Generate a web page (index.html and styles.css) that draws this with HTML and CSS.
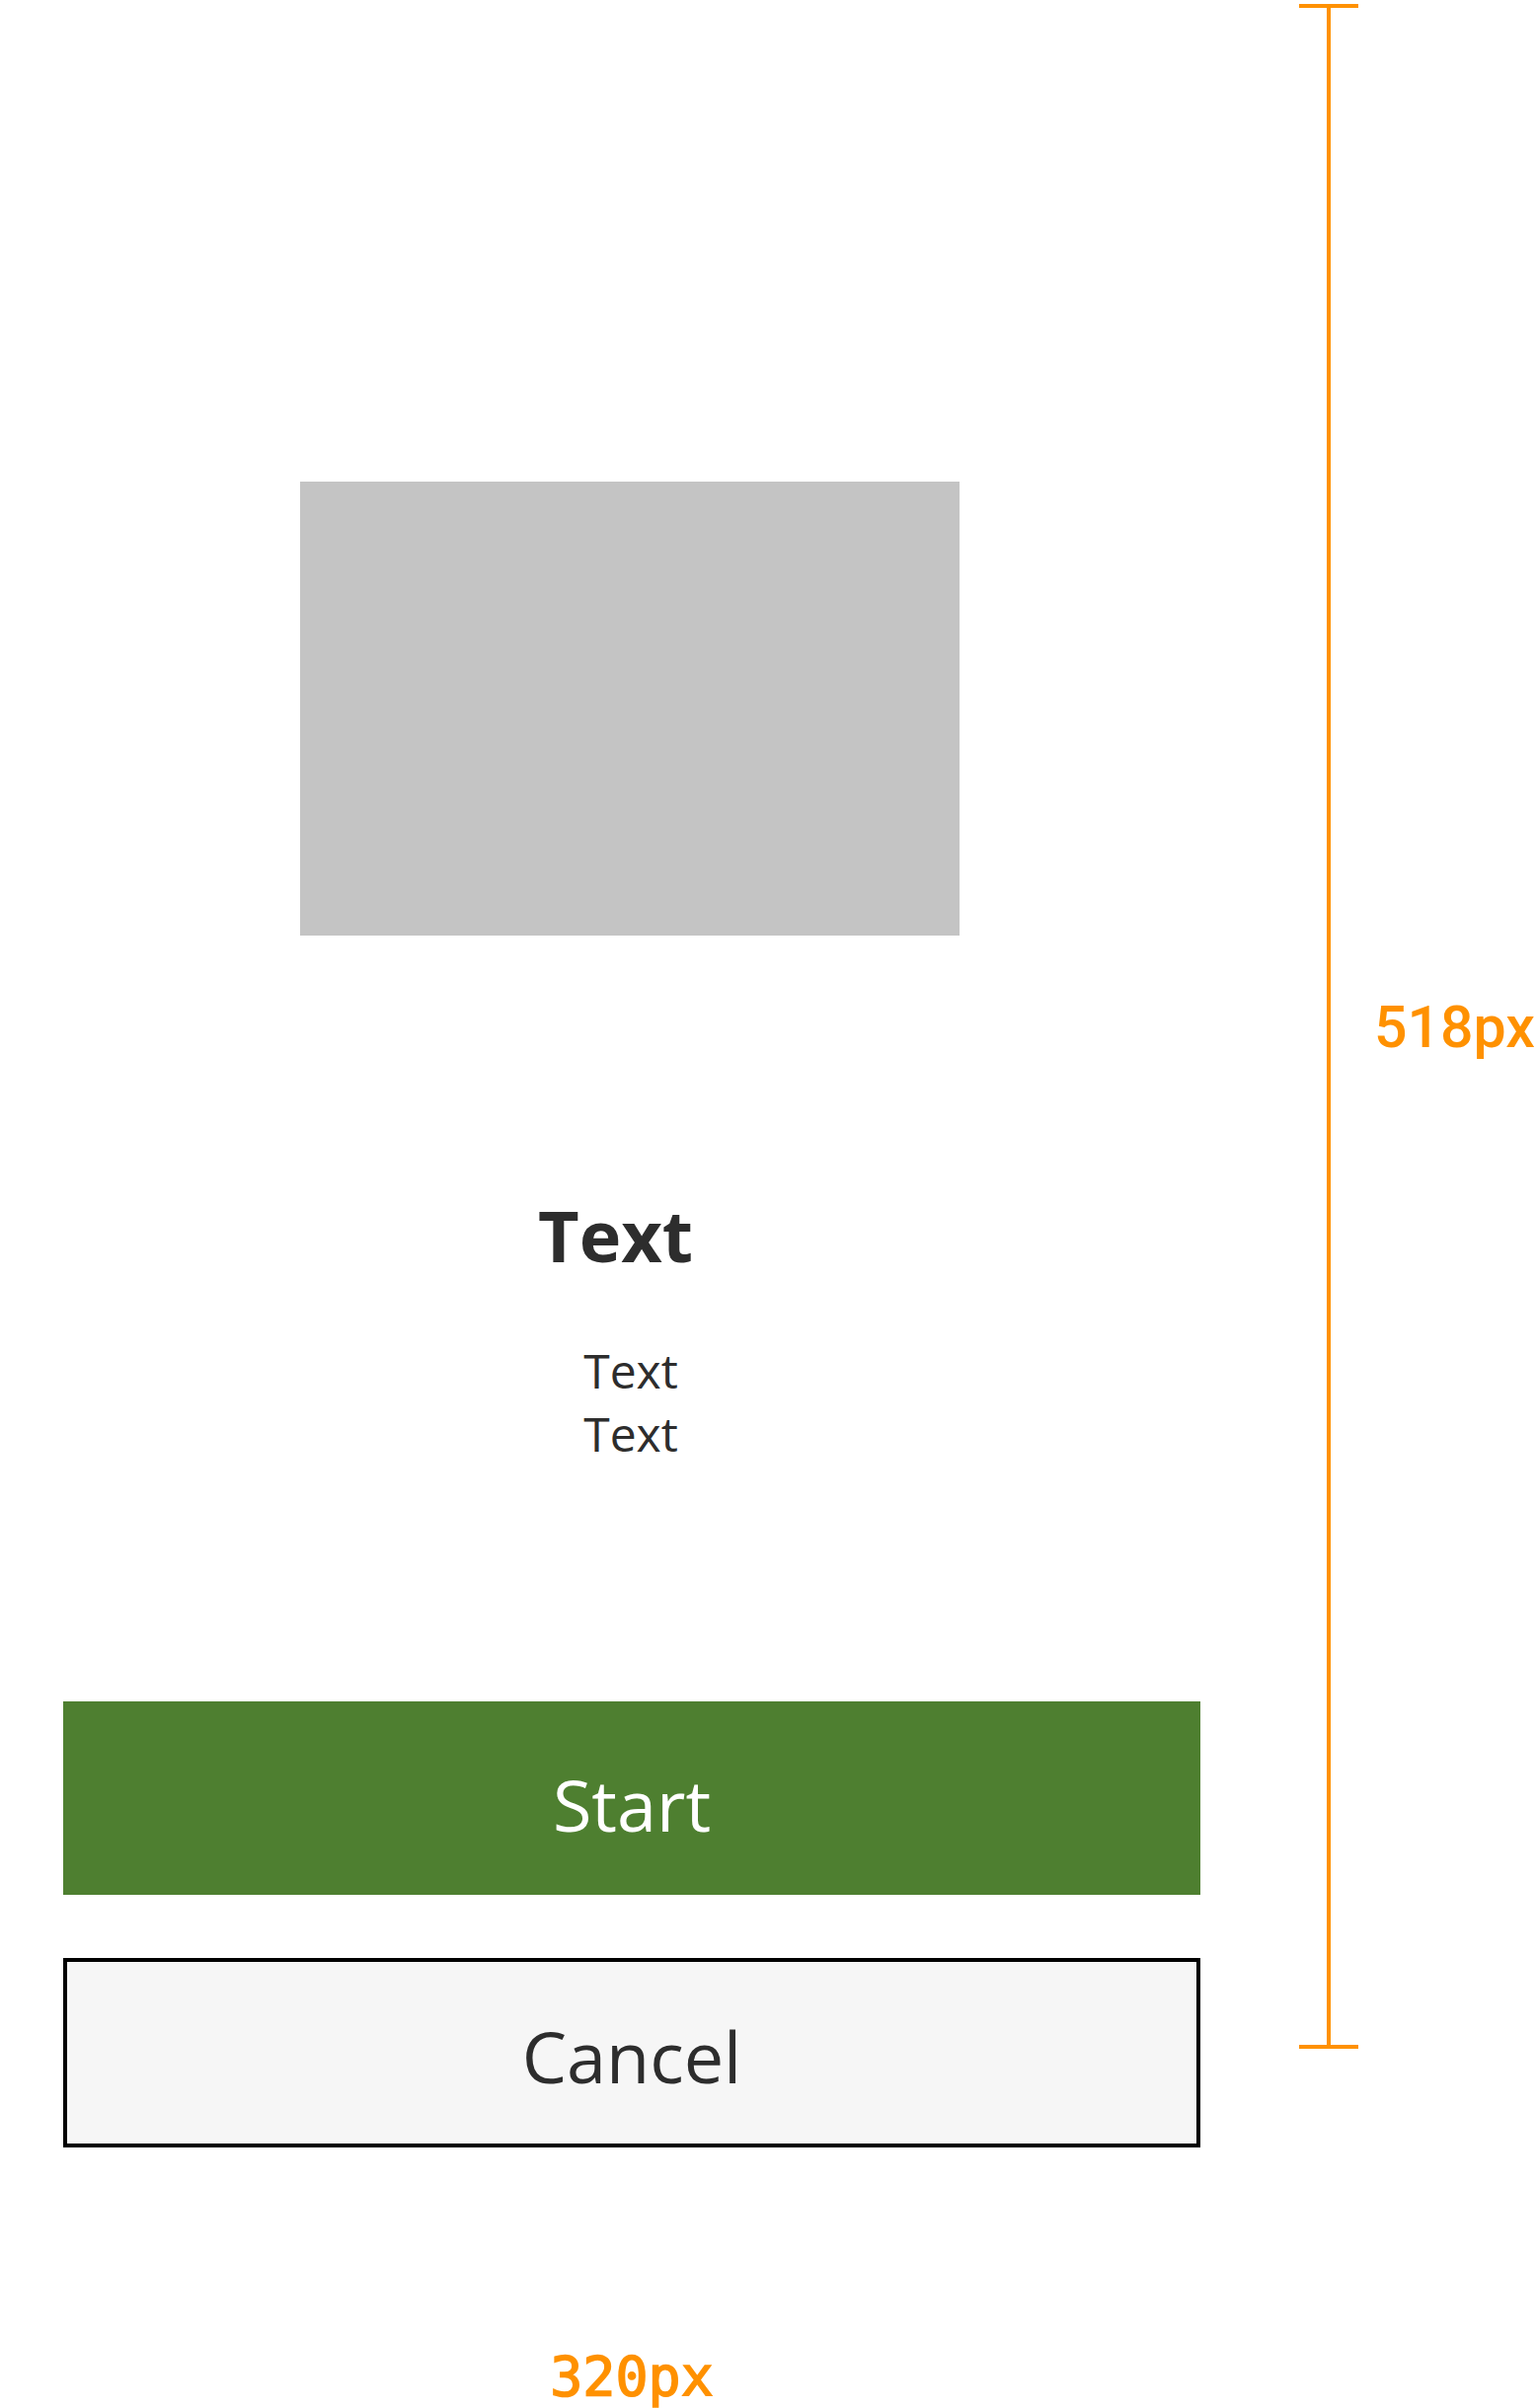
FILE: index.html
```html
<!DOCTYPE html>
<html lang="en">
<head>
<meta charset="utf-8">
<title>Start screen</title>
<link rel="stylesheet" href="styles.css">
</head>
<body>
<div class="canvas">
  <div class="screen">
    <div class="image-placeholder"></div>
    <h1 class="title">Text</h1>
    <p class="desc">Text<br>Text</p>
    <button class="btn btn-start" type="button">Start</button>
    <button class="btn btn-cancel" type="button">Cancel</button>
  </div>
  <div class="height-measure">
    <div class="ruler">
      <span class="ruler-cap"></span>
      <span class="ruler-line"></span>
      <span class="ruler-cap"></span>
    </div>
    <span class="measure-label">518px</span>
  </div>
</div>
<div class="width-label">320px</div>
</body>
</html>
```

FILE: styles.css
```css
html, body {
  margin: 0;
  padding: 0;
  background: #ffffff;
}

body {
  width: 1557px;
  height: 2440px;
  overflow: hidden;
  font-family: "Open Sans", "Noto Sans", sans-serif;
  color: #2d2d2d;
}

.canvas {
  display: flex;
  align-items: flex-start;
}

.screen {
  width: 1280px;
  flex: none;
  display: flex;
  flex-direction: column;
}

.image-placeholder {
  margin-top: 488px;
  margin-left: 304px;
  width: 668px;
  height: 460px;
  background: #c4c4c4;
}

.title {
  margin: 254px 0 0 0;
  padding-right: 33px;
  font-size: 72px;
  font-weight: 700;
  line-height: 98px;
  text-align: center;
  color: #2d2d2d;
}

.desc {
  margin: 57px 0 0 0;
  padding-right: 2px;
  font-size: 48px;
  line-height: 64px;
  text-align: center;
  color: #2d2d2d;
}

.btn {
  appearance: none;
  -webkit-appearance: none;
  box-sizing: border-box;
  margin-left: 64px;
  width: 1152px;
  display: flex;
  align-items: center;
  justify-content: center;
  font-family: "Open Sans", "Noto Sans", sans-serif;
  font-size: 72px;
  font-weight: 400;
  line-height: 1.362;
  border-radius: 0;
  cursor: pointer;
}

.btn-start {
  margin-top: 239px;
  height: 196px;
  padding: 12px 0 0 0;
  border: none;
  background: #4e7f30;
  color: #ffffff;
}

.btn-cancel {
  margin-top: 64px;
  height: 192px;
  padding: 6px 0 0 0;
  border: 4px solid #000000;
  background: #f6f6f6;
  color: #2d2d2d;
}

.height-measure {
  margin-top: 4px;
  height: 2072px;
  display: flex;
  align-items: center;
}

.ruler {
  margin-left: 36px;
  width: 60px;
  height: 100%;
  display: flex;
  flex-direction: column;
  align-items: center;
}

.ruler-cap {
  display: block;
  width: 60px;
  height: 4px;
  background: #ff9100;
}

.ruler-line {
  display: block;
  width: 4px;
  flex: 1;
  background: #ff9100;
}

.measure-label {
  margin-left: 16px;
  font-family: "Roboto", "Noto Sans", sans-serif;
  font-size: 59px;
  font-weight: 500;
  color: #ff9100;
  white-space: nowrap;
}

.width-label {
  width: 1280px;
  margin-top: 205px;
  text-align: center;
  font-family: "DejaVu Sans Mono", "Liberation Mono", monospace;
  font-size: 55px;
  font-weight: 400;
  line-height: 1;
  color: #ff9100;
  -webkit-text-stroke: 1.5px #ff9100;
}
```
